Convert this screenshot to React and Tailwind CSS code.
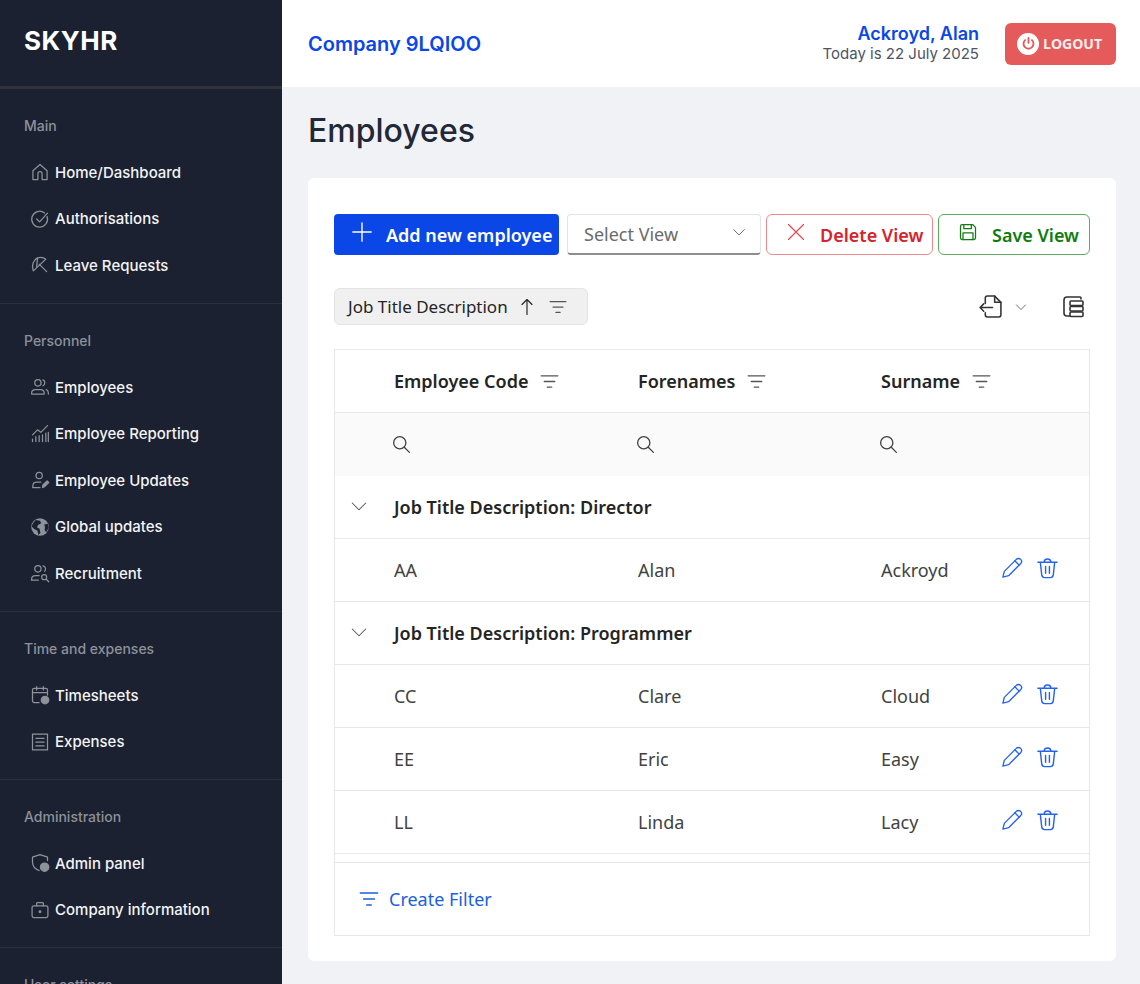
import React from "react";

const S = ({ size = 20, sw = 1.6, children, className = "" }) => (
  <svg width={size} height={size} viewBox="0 0 24 24" fill="none" stroke="currentColor" strokeWidth={sw} strokeLinecap="round" strokeLinejoin="round" className={className}>
    {children}
  </svg>
);

const FilterI = ({ size = 22, className = "" }) => (
  <S size={size} sw={1.5} className={className}>
    <path d="M2.5 5.5h19M6 12h12M9.5 18.5h5" />
  </S>
);
const SearchI = () => (
  <S size={21} sw={1.5}><circle cx="10" cy="10" r="7" /><path d="M15.2 15.2 21 21" /></S>
);
const Chev = ({ size = 20, className = "" }) => (
  <S size={size} sw={1.4} className={className}><path d="M3 8l9 9 9-9" /></S>
);

const icons = {
  home: <path d="M3.5 10.5 12 3l8.5 7.5V21h-6v-7a2.5 2.5 0 0 0-5 0v7h-6z" />,
  check: <><path d="M20.5 9a9.5 9.5 0 1 1-3-4.2" /><path d="M8 12l3.5 3.5L21 5" /></>,
  umbrella: <><path d="M4 19C1.500 12 4 6 9 3.500c5-1.500 8 0 10 1.500L4 19z" /><path d="M11 11l9 9" /><path d="M9 4 8 14" /></>,
  users: <><circle cx="9.500" cy="7" r="3.800" /><path d="M2 20.500v-1.500c0-2.500 2-4 4.500-4h6c2.500 0 4.500 1.500 4.500 4v1.500z" /><path d="M15.500 3.500a3.800 3.800 0 0 1 0 7M19.500 15c1.500.8 2.500 2 2.500 4v1.500" /></>,
  chart: <><path d="M3 21v-3M7 21v-6M11 21v-7M15 21v-8M19 21V11M22 21V10" /><path d="M3 13l6-6 4 3 8-8" /></>,
  userpen: <><circle cx="11" cy="6.500" r="3.800" /><path d="M3.500 21v-2.500c0-2.500 2-4 4.500-4h5" /><path d="M3.500 21H12" /><path d="M15 21l.5-3 5-5 2 2-5 5z" fill="currentColor" /></>,
  userfind: <><circle cx="9.500" cy="7" r="3.800" /><path d="M2 20.500v-1.500c0-2.500 2-4 4.500-4H11" /><path d="M2 20.500h8" /><path d="M15.500 3.500a3.800 3.800 0 0 1 2 6.500" /><circle cx="17" cy="17" r="3" /><path d="M19.500 19.500 22.500 22.500" /></>,
  cal: <><path d="M11 21H5a2 2 0 0 1-2-2V6a2 2 0 0 1 2-2h14a2 2 0 0 1 2 2v6" /><path d="M3 9h18M8 2v4M16 2v4" /><circle cx="18" cy="18" r="4.500" fill="currentColor" /></>,
  list: <><rect x="3" y="2.500" width="18" height="19" /><path d="M7 7.500h10M7 12h10M7 16.500h10" /></>,
  shield: <><path d="M11 21c-5-2-8-5-8-10V5l9-3 9 3v4" /><circle cx="17.500" cy="17" r="5" fill="currentColor" /></>,
  case: <><rect x="2.500" y="7" width="19" height="14" rx="2" /><path d="M8 7V4a1 1 0 0 1 1-1h6a1 1 0 0 1 1 1v3" /><circle cx="12" cy="14" r="1" fill="currentColor" /></>,
};

const Globe = () => (
  <svg width="20" height="20" viewBox="0 0 24 24">
    <circle cx="12" cy="12" r="10.500" fill="currentColor" />
    <path d="M7 3.500l5 1 1.500 3-4 2-1 3 3 1.500 1 5-2.500 2.500-1-5-4-2-3-3C3 8 5 5 7 3.500zM17 9l4.500-1 1 5-3 5-2-2 .5-4z" fill="#1b2130" />
  </svg>
);

const Item = ({ icon, label, h = "h-[46.6px]" }) => (
  <div className={`flex items-center ${h}`}>
    <span className="w-[26px] ml-[3px] flex justify-center text-[#8f929b]">
      {icon === "globe" ? <Globe /> : <S size={20} sw={1.5}>{icons[icon]}</S>}
    </span>
    <span className="ml-[2px] text-[15px] font-medium text-[#f3f4f6] leading-none">{label}</span>
  </div>
);

const Group = ({ title, items, last }) => (
  <div className={`px-6 pt-[27px] ${last ? "" : "pb-[14px] border-b-[1.5px] border-[#2a2f3d]"}`}>
    <div className="h-5 leading-5 text-sm font-medium text-[#8d919b] mb-[13px]">{title}</div>
    {items.map(([i, l]) => <Item key={l} icon={i} label={l} />)}
  </div>
);

const Sidebar = () => (
  <aside className="w-[282px] shrink-0 bg-[#1b2130] h-full overflow-hidden" style={{ fontFamily: "Inter, sans-serif" }}>
    <div className="h-[89px] border-b-[3px] border-[#2f323b] flex items-center px-6 pb-[5px]">
      <span className="text-[26px] font-bold tracking-[0.5px] text-white">SKYHR</span>
    </div>
    <Group title="Main" items={[["home", "Home/Dashboard"], ["check", "Authorisations"], ["umbrella", "Leave Requests"]]} />
    <Group title="Personnel" items={[["users", "Employees"], ["chart", "Employee Reporting"], ["userpen", "Employee Updates"], ["globe", "Global updates"], ["userfind", "Recruitment"]]} />
    <Group title="Time and expenses" items={[["cal", "Timesheets"], ["list", "Expenses"]]} />
    <Group title="Administration" items={[["shield", "Admin panel"], ["case", "Company information"]]} />
    <Group title="User settings" items={[]} last />
  </aside>
);

const Header = () => (
  <header className="h-[87px] bg-white flex items-center pl-[26px] pr-6 shrink-0" style={{ fontFamily: "Inter, sans-serif" }}>
    <span className="text-xl font-semibold text-[#0a47e6]">Company 9LQIOO</span>
    <div className="ml-auto text-right mr-[26px]">
      <div className="text-lg leading-[20px] font-semibold text-[#0a47e6]">Ackroyd, Alan</div>
      <div className="text-[15px] leading-[20px] text-[#4b5563]">Today is 22 July 2025</div>
    </div>
    <button className="w-[111px] h-[42px] rounded-md bg-[#e55b5b] flex items-center pl-[12px] gap-[4px]">
      <span className="w-[22px] h-[22px] rounded-full bg-white flex items-center justify-center text-[#e55b5b]">
        <S size={15} sw={3}><path d="M12 3v8" /><path d="M6.500 6.500a8 8 0 1 0 11 0" /></S>
      </span>
      <span className="text-sm font-bold text-white/90" style={{ fontFamily: "'Open Sans', sans-serif" }}>LOGOUT</span>
    </button>
  </header>
);

const Toolbar = () => (
  <div className="flex h-[41px] text-lg">
    <button className="w-[225px] bg-[#0a47e6] text-white font-semibold rounded-[4px] flex items-center pl-[17px]">
      <S size={22} sw={1.5} className="mt-[-5px]"><path d="M12 2v20M2 12h20" /></S>
      <span className="ml-[13px]">Add new employee</span>
    </button>
    <div className="ml-2 w-[194px] border border-[#e3e3e3] border-b-[2px] border-b-[#8e8e8e] rounded-[4px] flex items-center pl-[16px] pr-[14px] text-[#6b6b6b]">
      <span>Select View</span>
      <Chev size={14} className="ml-auto text-[#444] mt-[-4px]" />
    </div>
    <button className="ml-[5px] w-[167px] border-[1.5px] border-[#e98a8f] rounded-[6px] flex items-center pl-[19px] text-[#d6222c] font-semibold">
      <S size={20} sw={1.4} className="mt-[-5px] text-[#e5484f]"><path d="M3 3l18 18M21 3 3 21" /></S>
      <span className="ml-[14px]">Delete View</span>
    </button>
    <button className="ml-[5px] w-[152px] border-[1.5px] border-[#5bab5b] rounded-[6px] flex items-center pl-[19px] text-[#107c10] font-semibold">
      <S size={20} sw={1.5} className="mt-[-5px]">
        <path d="M3 5a2 2 0 0 1 2-2h12.500L21 6.500V19a2 2 0 0 1-2 2H5a2 2 0 0 1-2-2z" />
        <path d="M7 3v5h9V3M6 21v-8h12v8" />
      </S>
      <span className="ml-[14px]">Save View</span>
    </button>
  </div>
);

const SubBar = () => (
  <div className="flex items-center mt-[33px] h-[37px]">
    <div className="w-[254px] h-[37px] bg-[#f0f0f0] border border-[#e3e3e3] rounded-[6px] flex items-center pl-[13px] text-[#242424] text-[17px]">
      <span>Job Title Description</span>
      <S size={20} sw={1.4} className="ml-[9px]"><path d="M12 21V3M6 9l6-6 6 6" /></S>
      <FilterI size={20} className="ml-[11px] text-[#555]" />
    </div>
    <div className="ml-auto flex items-center text-[#333] mr-[8px]">
      <S size={25} sw={1.5}>
        <path d="M7 9V4a2 2 0 0 1 2-2h7l6 6v12a2 2 0 0 1-2 2H9a2 2 0 0 1-2-2v-2" />
        <path d="M16 2v6h6M14 13H2M5.500 9.500 2 13l3.500 3.500" />
      </S>
      <Chev size={12} className="ml-[12px] text-[#333]" />
      <S size={24} sw={1.6} className="ml-[34px] mr-[-3px]">
        <path d="M20 4V3a1 1 0 0 0-1-1H6a3 3 0 0 0-3 3v13a3 3 0 0 0 3 3h3" />
        <rect x="9" y="6" width="13" height="4.500" rx="1" />
        <rect x="9" y="11.500" width="13" height="4.500" rx="1" />
        <rect x="9" y="17" width="13" height="4.500" rx="1" />
      </S>
    </div>
  </div>
);

const grid = "grid grid-cols-[59px_244px_243px_1fr] items-center";

const HeadCell = ({ label, gap = "ml-[11px]" }) => (
  <div className="flex items-center font-semibold text-[#242424]">
    <span>{label}</span>
    <FilterI size={21} className={`${gap} text-[#555]`} />
  </div>
);

const Row = ({ a, b, c }) => (
  <div className={`${grid} h-[63px] border-b-[1.5px] border-[#e8e8e8] text-[#424242]`}>
    <div />
    <div>{a}</div>
    <div>{b}</div>
    <div className="flex items-center">
      <span>{c}</span>
      <span className="absolute-none ml-auto mr-[30px] flex items-center gap-[13px] text-[#2563eb] mt-[-4px]">
        <S size={23} sw={1.4}>
          <path d="M3 21l1.500-6L17 2.500a2.800 2.800 0 0 1 4.500 4.500L9 19.500z" />
          <path d="M15.500 4l4.500 4.500" />
        </S>
        <S size={23} sw={1.5}>
          <path d="M2 5.500h20M8.500 5.500a3.500 3.500 0 0 1 7 0M4.500 5.500 6 19a3 3 0 0 0 3 2.500h6a3 3 0 0 0 3-2.500l1.500-13.500" />
          <path d="M10 10v7M14 10v7" />
        </S>
      </span>
    </div>
  </div>
);

const GroupRow = ({ label }) => (
  <div className="flex items-center h-[63px] border-b-[1.5px] border-[#e8e8e8] font-semibold text-[#242424]">
    <Chev size={18} className="ml-[15px] text-[#555] mt-[-3px]" />
    <span className="ml-[26px]">{label}</span>
  </div>
);

const Table = () => (
  <div className="mt-[24px] border-[1.5px] border-[#e8e8e8] text-lg">
    <div className={`${grid} h-[63px] border-b-[1.5px] border-[#e8e8e8]`}>
      <div />
      <HeadCell label="Employee Code" />
      <HeadCell label="Forenames" />
      <HeadCell label="Surname" />
    </div>
    <div className={`${grid} h-[63px] bg-[#fafafa] text-[#424242]`}>
      <div />
      <div className="-ml-[3px]"><SearchI /></div>
      <div className="-ml-[3px]"><SearchI /></div>
      <div className="-ml-[3px]"><SearchI /></div>
    </div>
    <GroupRow label="Job Title Description: Director" />
    <Row a="AA" b="Alan" c="Ackroyd" />
    <GroupRow label="Job Title Description: Programmer" />
    <Row a="CC" b="Clare" c="Cloud" />
    <Row a="EE" b="Eric" c="Easy" />
    <Row a="LL" b="Linda" c="Lacy" />
    <div className="h-[8px]" />
    <div className="h-[73px] border-t-[1.5px] border-[#e8e8e8] flex items-center pl-[23px] text-[#1a5fe0]">
      <FilterI size={22} />
      <span className="ml-[9px]">Create Filter</span>
    </div>
  </div>
);

export default function App() {
  return (
    <div className="flex w-[1140px] h-[984px] overflow-hidden bg-[#f1f2f6]">
      <Sidebar />
      <div className="flex-1 flex flex-col min-w-0">
        <Header />
        <main className="px-[26px] pr-6">
          <h1 className="h-[91px] flex items-center text-[32px] font-medium text-[#1f2937] pb-[3px]" style={{ fontFamily: "Inter, sans-serif" }}>Employees</h1>
          <section className="bg-white rounded-md h-[783px] px-[26px] pt-9" style={{ fontFamily: "'Noto Sans', sans-serif" }}>
            <Toolbar />
            <SubBar />
            <Table />
          </section>
        </main>
      </div>
    </div>
  );
}
